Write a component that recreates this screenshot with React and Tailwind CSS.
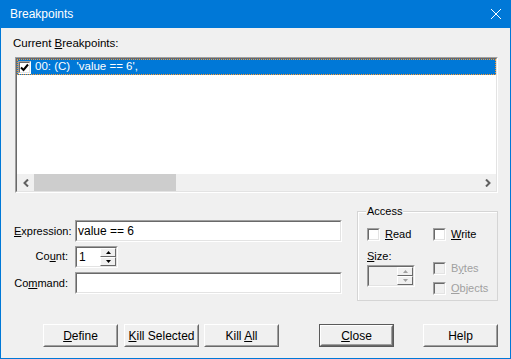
import React from 'react';

const sunkenOuter = 'border border-t-[#a0a0a0] border-l-[#a0a0a0] border-r-white border-b-white';
const sunkenInner = 'border border-t-[#696969] border-l-[#696969] border-r-[#e3e3e3] border-b-[#e3e3e3]';

function Check({ checked, disabled }) {
    return (
        <div className={`w-[13px] h-[13px] shrink-0 ${sunkenOuter}`}>
            <div className={`w-full h-full ${sunkenInner} ${disabled ? 'bg-[#f0f0f0]' : 'bg-white'} flex items-center justify-center`}>
                {checked && (
                    <svg width="9" height="9" viewBox="0 0 9 9">
                        <polyline points="1,4.5 3.5,7 8,1.5" fill="none" stroke="black" strokeWidth="2" />
                    </svg>
                )}
            </div>
        </div>
    );
}

function SpinBtn({ up, disabled }) {
    const fill = disabled ? '#a0a0a0' : '#000';
    return (
        <div className="flex-1 bg-[#f0f0f0] border border-t-white border-l-white border-r-[#696969] border-b-[#696969] flex items-center justify-center">
            <svg width="5" height="3" viewBox="0 0 5 3">
                {up ? <polygon points="0,3 5,3 2.5,0" fill={fill} /> : <polygon points="0,0 5,0 2.5,3" fill={fill} />}
            </svg>
        </div>
    );
}

function Spinner({ value, width, disabled }) {
    return (
        <div className={`${width} h-[22px] ${sunkenOuter}`}>
            <div className={`h-full flex ${sunkenInner} ${disabled ? 'bg-[#f0f0f0]' : 'bg-white'}`}>
                <div className="flex-1 px-[2px] text-[12px] leading-[18px]">{value}</div>
                <div className="w-[16px] flex flex-col">
                    <SpinBtn up disabled={disabled} />
                    <SpinBtn disabled={disabled} />
                </div>
            </div>
        </div>
    );
}

function Field({ label, children, h }) {
    return (
        <div className={`flex items-center ${h}`}>
            <div className="w-[54px] text-right mr-[7px]">{label}</div>
            {children}
        </div>
    );
}

function TextBox({ value }) {
    return (
        <div className={`w-[267px] h-full ${sunkenOuter}`}>
            <div className={`h-full ${sunkenInner} bg-white px-[1px] text-[12px] leading-[18px]`}>{value}</div>
        </div>
    );
}

function Button({ children, isDefault, className = '' }) {
    return (
        <div className={`w-[75px] h-[23px] ${isDefault ? 'border border-[#5a5a5a]' : ''} ${className}`}>
            <div className="h-full border border-t-white border-l-white border-r-[#696969] border-b-[#696969]">
                <div className="h-full border border-t-[#f0f0f0] border-l-[#f0f0f0] border-r-[#a0a0a0] border-b-[#a0a0a0] bg-[#f0f0f0] flex items-center justify-center text-[12px]">
                    <span>{children}</span>
                </div>
            </div>
        </div>
    );
}

function Chevron({ left }) {
    return (
        <svg width="6" height="8" viewBox="0 0 6 8">
            <polyline
                points={left ? '5,0.5 1.5,4 5,7.5' : '1,0.5 4.5,4 1,7.5'}
                fill="none"
                stroke="#606060"
                strokeWidth="2"
            />
        </svg>
    );
}

export default function App() {
    return (
        <div className="w-[511px] h-[359px] bg-[#f0f0f0] border-x border-b border-[#0078d7] flex flex-col font-['Liberation_Sans',Arial,sans-serif] text-[11px] text-black overflow-hidden">
            {/* title bar */}
            <div className="h-[28px] shrink-0 bg-[#0078d7] flex items-center justify-between pl-[9px] pr-[9px] text-white text-[12px]">
                <span>Breakpoints</span>
                <svg width="10" height="10" viewBox="0 0 10 10">
                    <line x1="0" y1="0" x2="10" y2="10" stroke="white" strokeWidth="1" />
                    <line x1="10" y1="0" x2="0" y2="10" stroke="white" strokeWidth="1" />
                </svg>
            </div>

            <div className="flex flex-col pl-[12px]">
                <div className="mt-[9px] h-[13px] leading-[13px] text-[11.5px]">
                    Current <u>B</u>reakpoints:
                </div>

                {/* list */}
                <div className={`mt-[7px] ml-[2px] w-[483px] h-[136px] ${sunkenOuter}`}>
                    <div className={`h-full flex flex-col ${sunkenInner} bg-white`}>
                        <div className="flex-1">
                            <div className="h-[16px] bg-[#0078d7] border border-dotted border-[#ff9a2e] flex items-center text-white text-[11.5px]">
                                <Check checked />
                                <span className="ml-[4px] whitespace-pre">00: (C)  'value == 6',</span>
                            </div>
                        </div>
                        <div className="h-[17px] bg-[#f0f0f0] flex items-center">
                            <div className="w-[17px] flex justify-center">
                                <Chevron left />
                            </div>
                            <div className="w-[142px] h-full bg-[#cdcdcd]" />
                            <div className="flex-1" />
                            <div className="w-[17px] flex justify-center">
                                <Chevron />
                            </div>
                        </div>
                    </div>
                </div>

                {/* fields + access group */}
                <div className="mt-[12px] flex">
                    <div className="ml-[1px] pt-[15px] flex flex-col">
                        <Field label={<><u>E</u>xpression:</>} h="h-[22px]">
                            <TextBox value="value == 6" />
                        </Field>
                        <Field label={<>Co<u>u</u>nt:</>} h="h-[21px] mt-[4px]">
                            <Spinner value="1" width="w-[43px]" />
                        </Field>
                        <Field label={<>Co<u>m</u>mand:</>} h="h-[22px] mt-[5px]">
                            <TextBox value="" />
                        </Field>
                    </div>

                    <div className="ml-[15px] mt-[6px] w-[141px] h-[90px] border border-[#d5d5d5] shadow-[inset_1px_1px_0_#fff] flex flex-col leading-[13px]">
                        <span className="-mt-[7px] ml-[8px] px-[1px] self-start bg-[#f0f0f0] h-[13px]">Access</span>
                        <div className="pl-[9px] mt-[10px] h-[13px] flex items-center">
                            <div className="w-[66px] flex items-center">
                                <Check />
                                <span className="ml-[5px]"><u>R</u>ead</span>
                            </div>
                            <div className="flex items-center">
                                <Check />
                                <span className="ml-[5px]"><u>W</u>rite</span>
                            </div>
                        </div>
                        <div className="pl-[9px] flex">
                            <div className="w-[66px] flex flex-col">
                                <span className="mt-[9px] h-[13px]"><u>S</u>ize:</span>
                                <div className="mt-[2px]">
                                    <Spinner value="" width="w-[48px]" disabled />
                                </div>
                            </div>
                            <div className="flex flex-col text-[#a0a0a0]">
                                <div className="mt-[21px] h-[13px] flex items-center">
                                    <Check disabled />
                                    <span className="ml-[5px]">B<u>y</u>tes</span>
                                </div>
                                <div className="mt-[7px] h-[13px] flex items-center">
                                    <Check disabled />
                                    <span className="ml-[5px]"><u>O</u>bjects</span>
                                </div>
                            </div>
                        </div>
                    </div>
                </div>

                {/* buttons */}
                <div className="mt-[23px] ml-[30px] flex">
                    <Button><u>D</u>efine</Button>
                    <Button className="ml-[6px]"><u>K</u>ill Selected</Button>
                    <Button className="ml-[5px]">Kill <u>A</u>ll</Button>
                    <Button isDefault className="ml-[40px]"><u>C</u>lose</Button>
                    <Button className="ml-[29px]">Help</Button>
                </div>
            </div>
        </div>
    );
}
